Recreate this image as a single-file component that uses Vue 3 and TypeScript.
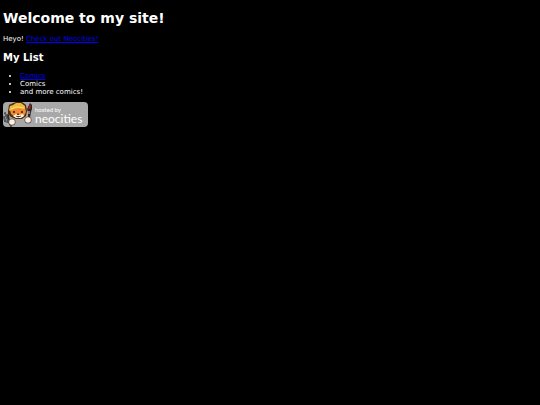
<script setup lang="ts">
interface ListEntry {
  text: string
  href?: string
}

const entries: ListEntry[] = [
  { text: 'Comics', href: '#comics' },
  { text: 'Comics' },
  { text: 'and more comics!' },
]
</script>

<template>
  <main class="page">
    <h1>Welcome to my site!</h1>
    <p>Heyo! <a href="https://neocities.org">Check out Neocities!</a></p>
    <h2>My List</h2>
    <ul>
      <li v-for="(entry, index) in entries" :key="index">
        <a v-if="entry.href" :href="entry.href">{{ entry.text }}</a>
        <template v-else>{{ entry.text }}</template>
      </li>
    </ul>
    <a class="badge" href="https://neocities.org">
      <svg class="cat" viewBox="0 0 32 25" aria-hidden="true">
        <!-- fork -->
        <g fill="none" stroke-linecap="round">
          <path d="M1 15l1 4 3 1 1-2-1-5M2 11l2 5 4 8" stroke="#2b2e31" stroke-width="1.8" />
          <path d="M1 15l1 4 3 1M2 11l2 5 4 8" stroke="#8b9093" stroke-width=".6" />
        </g>
        <!-- brush -->
        <path d="M27 1l2 2 0 4-1 3-1 6-2 0 0-6-1-3z" fill="#35201d" />
        <path d="M27 2l1 2-1 3-2 0z" fill="#a3252b" />
        <path d="M26 9v3" stroke="#e0d6c8" stroke-width="1" />
        <!-- head -->
        <path d="M5 9L6 3l2-1 5-2 6 0 4 3 1 6-1 5-4 3-6 0-5-2-3-3z" fill="#4b2b10" />
        <path d="M7 8l4-5 6-1 5 3 1 5-2 4-4 2-5-1-4-3z" fill="#ef8933" />
        <path d="M6 8l1-4 3-1 3-2 5 0 4 3 0 3-6-1-5 1-4 2z" fill="#efba3c" />
        <path d="M8 7l5-2 8 1" fill="none" stroke="#ffdf72" stroke-width="1" />
        <path d="M10 14l3-2 3 1 4-1 1 2-3 2-5 0z" fill="#fff1dc" />
        <path d="M11 9v2M19 9v2" stroke="#28170f" stroke-width="1.4" />
        <path d="M14 12h2l-1 1zM13 14l2 1 3-1" fill="#472013" stroke="#472013" stroke-width=".6" />
        <!-- paws -->
        <circle cx="9" cy="20" r="3.500" fill="#5a4c42" />
        <circle cx="9" cy="20" r="2.800" fill="#fff1df" />
        <circle cx="25" cy="18" r="3.500" fill="#5a4c42" />
        <circle cx="25" cy="18" r="2.800" fill="#fff1df" />
      </svg>
      <span class="wordmark">
        <span class="hosted">hosted by</span>
        <span class="name">neocities</span>
      </span>
    </a>
  </main>
</template>

<style>
body {
  background: #000;
}
</style>

<style scoped>
.page {
  padding: 9px 3px;
  color: #fff;
  font: 7px/8px Verdana, "DejaVu Sans", sans-serif;
}

h1 {
  margin: 0 0 8px;
  font-size: 14px;
  line-height: 18px;
}

p {
  margin: 0 0 8px;
}

h2 {
  margin: 0 0 7px;
  font-size: 10px;
  line-height: 14px;
}

ul {
  margin: 0 0 6px;
  padding-left: 17px;
}

a {
  color: #00e;
}

.badge {
  display: flex;
  width: 85px;
  height: 25px;
  border-radius: 4px;
  background: #a8a8a8;
  color: #fff;
  text-decoration: none;
}

.cat {
  flex: none;
  width: 32px;
  height: 25px;
}

.wordmark {
  display: flex;
  flex-direction: column;
  padding-top: 4px;
  font-family: Lato, "Open Sans", sans-serif;
}

.hosted {
  font-size: 6px;
  line-height: 7px;
}

.name {
  font-size: 12px;
  line-height: 11px;
}
</style>
